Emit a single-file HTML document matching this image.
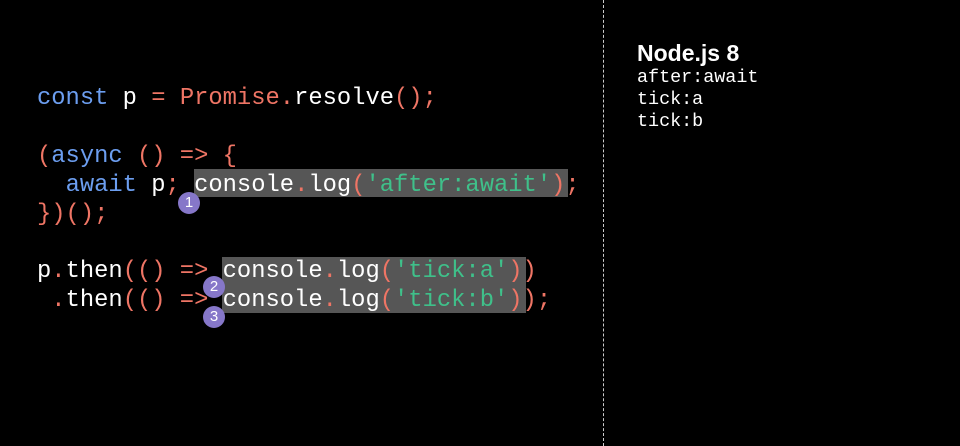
<!DOCTYPE html>
<html><head><style>
body{margin:0;width:960px;height:446px;background:#000;overflow:hidden;position:relative;font-family:"Liberation Mono",monospace}
.l{position:absolute;left:37px;font-size:23.8px;line-height:29px;white-space:pre;color:#fff}
.b{color:#6c9ef0}.o{color:#ef7565}.g{color:#3fc08a}
.hl{position:absolute;background:#565656}
.c{position:absolute;width:22px;height:22px;border-radius:50%;background:#8677c9;color:#fff;font:15px "Liberation Sans",sans-serif;text-align:center;line-height:22px}
.r{position:absolute;left:637px;color:#fff;font-size:18.4px;line-height:22px;white-space:pre}
</style></head><body>
<div style="position:absolute;left:603px;top:0;height:446px;border-left:1px dashed #ccc"></div>
<div class="hl" style="left:194px;top:169px;width:374px;height:28px"></div>
<div class="hl" style="left:222px;top:257px;width:304px;height:56px"></div>
<div class="l" style="top:84px"><span class="b">const</span> p <span class="o">=</span> <span class="o">Promise</span><span class="o">.</span>resolve<span class="o">();</span></div>
<div class="l" style="top:142px"><span class="o">(</span><span class="b">async</span> <span class="o">() =&gt; {</span></div>
<div class="l" style="top:171px">  <span class="b">await</span> p<span class="o">;</span> console<span class="o">.</span>log<span class="o">(</span><span class="g">'after:await'</span><span class="o">);</span></div>
<div class="l" style="top:200px"><span class="o">})();</span></div>
<div class="l" style="top:257px">p<span class="o">.</span>then<span class="o">(() =&gt;</span> console<span class="o">.</span>log<span class="o">(</span><span class="g">'tick:a'</span><span class="o">))</span></div>
<div class="l" style="top:286px"> <span class="o">.</span>then<span class="o">(() =&gt;</span> console<span class="o">.</span>log<span class="o">(</span><span class="g">'tick:b'</span><span class="o">));</span></div>
<div class="c" style="left:178px;top:192px">1</div>
<div class="c" style="left:203px;top:276px">2</div>
<div class="c" style="left:203px;top:306px">3</div>
<div class="r" style="top:39px;font:bold 23px 'Liberation Sans',sans-serif;line-height:28px">Node.js 8</div>
<div class="r" style="top:67px">after:await
tick:a
tick:b</div>
</body></html>
